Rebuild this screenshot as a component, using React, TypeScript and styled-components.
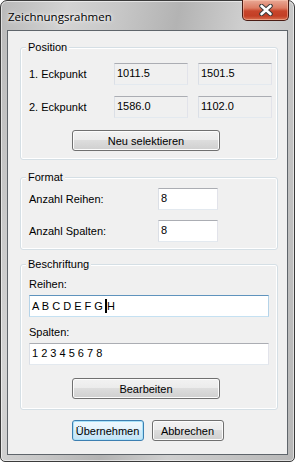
import React from 'react'
import styled, { createGlobalStyle } from 'styled-components'

const GlobalStyle = createGlobalStyle`
  html, body {
    margin: 0;
    padding: 0;
    background: #ffffff;
  }
  * {
    box-sizing: border-box;
  }
`

const Window = styled.div`
  width: 295px;
  height: 462px;
  display: flex;
  flex-direction: column;
  padding: 0 6px 6px 6px;
  border: 1px solid #3b3b3b;
  border-radius: 7px 7px 5px 5px;
  background: linear-gradient(
    100deg,
    #b9b9b9 0%,
    #d3d3d3 18%,
    #c7c7c7 32%,
    #b3b3b3 48%,
    #cfcfcf 66%,
    #c4c4c4 82%,
    #b7b7b7 100%
  );
  box-shadow: inset 0 0 0 1px rgba(255, 255, 255, 0.55);
  font-family: 'Liberation Sans', Arial, sans-serif;
  font-size: 11px;
  color: #000;
`

const TitleBar = styled.div`
  height: 29px;
  flex: none;
  display: flex;
  justify-content: space-between;
  align-items: flex-start;
`

const Title = styled.div`
  align-self: center;
  margin: 1px 0 0 1px;
  font-family: 'Open Sans', 'Noto Sans', sans-serif;
  font-size: 11.5px;
  color: #000;
  text-shadow: 0 0 6px rgba(255, 255, 255, 0.9), 0 0 3px rgba(255, 255, 255, 0.9);
`

const CloseButton = styled.div`
  width: 47px;
  height: 21px;
  margin: -1px -1px 0 0;
  display: flex;
  align-items: center;
  justify-content: center;
  border: 1px solid #4a1c14;
  border-top: none;
  border-radius: 0 0 5px 5px;
  background: linear-gradient(#e9a996 0%, #dc7c63 40%, #c8452b 55%, #c33f25 80%, #d9704f 100%);
  box-shadow: inset 0 0 0 1px rgba(255, 210, 190, 0.45);
`

const Client = styled.div`
  height: 425px;
  display: flex;
  flex-direction: column;
  padding: 0 9px 0 12px;
  border: 1px solid #5f656b;
  background: #f0f0f0;
`

const Group = styled.div<{ $top: number; $bottom: number }>`
  margin-top: ${p => p.$top}px;
  padding: 0 7px ${p => p.$bottom}px 8px;
  border: 1px solid #d5dfe5;
  border-radius: 3px;
  box-shadow: inset 0 0 0 1px #ffffff;
  display: flex;
  flex-direction: column;
`

const Legend = styled.div`
  width: fit-content;
  height: 13px;
  line-height: 13px;
  margin: -7px 0 0 -3px;
  padding: 0 2px;
  background: #f0f0f0;
`

const FieldGrid = styled.div<{ $cols: string; $top: number; $gap: number }>`
  display: grid;
  grid-template-columns: ${p => p.$cols};
  column-gap: 10px;
  row-gap: ${p => p.$gap}px;
  align-items: center;
  margin-top: ${p => p.$top}px;
`

const Label = styled.div<{ $top?: number }>`
  line-height: 13px;
  margin-top: ${p => p.$top ?? 0}px;
`

const Field = styled.div<{ $readOnly?: boolean; $focused?: boolean }>`
  height: 22px;
  padding: 3px 3px 0 2px;
  line-height: 13px;
  white-space: pre;
  background: ${p => (p.$readOnly ? '#f0f0f0' : '#ffffff')};
  border: 1px solid;
  border-color: ${p =>
    p.$focused ? '#5f93bd #b5d3e8 #c5e1f2 #b5d3e8' : '#abadb3 #e2e3ea #e3e9ef #dbdfe6'};
`

const WideField = styled(Field)<{ $top: number }>`
  margin-top: ${p => p.$top}px;
  width: 240px;
`

const Caret = styled.span`
  display: inline-block;
  width: 2px;
  height: 14px;
  margin: 0 0 -3px -1px;
  background: #000;
`

const Button = styled.div<{ $default?: boolean; $width: number; $top?: number; $left?: number }>`
  width: ${p => p.$width}px;
  height: 21px;
  margin-top: ${p => p.$top ?? 0}px;
  margin-left: ${p => p.$left ?? 0}px;
  display: flex;
  align-items: center;
  justify-content: center;
  border: 1px solid ${p => (p.$default ? '#3c7fb1' : '#707070')};
  border-radius: 3px;
  background: ${p =>
    p.$default
      ? 'linear-gradient(#eef8fe 0%, #e3f3fc 49%, #d2ebf9 50%, #c4e4f6 100%)'
      : 'linear-gradient(#f2f2f2 0%, #ebebeb 49%, #dddddd 50%, #cfcfcf 100%)'};
  box-shadow: inset 0 0 0 1px ${p => (p.$default ? '#a9e2f9' : '#fcfcfc')};
`

const ButtonRow = styled.div`
  margin: 10px 0 0 -3px;
  display: flex;
  justify-content: center;
  gap: 8px;
`

function CloseIcon() {
  return (
    <svg width="14" height="12" viewBox="0 0 14 12">
      <path d="M2.5 2 L11.5 10 M11.5 2 L2.5 10" stroke="#3a3a3a" strokeWidth="4.6" strokeLinecap="round" />
      <path d="M2.5 2 L11.5 10 M11.5 2 L2.5 10" stroke="#ffffff" strokeWidth="2.6" strokeLinecap="round" />
    </svg>
  )
}

export default function App() {
  return (
    <>
      <GlobalStyle />
      <Window>
        <TitleBar>
          <Title>Zeichnungsrahmen</Title>
          <CloseButton>
            <CloseIcon />
          </CloseButton>
        </TitleBar>
        <Client>
          <Group $top={16} $bottom={8}>
            <Legend>Position</Legend>
            <FieldGrid $cols="75px 74px 74px" $top={9} $gap={11}>
              <Label>1. Eckpunkt</Label>
              <Field $readOnly>1011.5</Field>
              <Field $readOnly>1501.5</Field>
              <Label>2. Eckpunkt</Label>
              <Field $readOnly>1586.0</Field>
              <Field $readOnly>1102.0</Field>
            </FieldGrid>
            <Button $width={148} $top={12} $left={43}>
              Neu selektieren
            </Button>
          </Group>

          <Group $top={17} $bottom={7}>
            <Legend>Format</Legend>
            <FieldGrid $cols="119px 60px" $top={4} $gap={10}>
              <Label>Anzahl Reihen:</Label>
              <Field>8</Field>
              <Label>Anzahl Spalten:</Label>
              <Field>8</Field>
            </FieldGrid>
          </Group>

          <Group $top={14} $bottom={10}>
            <Legend>Beschriftung</Legend>
            <Label $top={7}>Reihen:</Label>
            <WideField $top={4} $focused>
              {'A B C D E F G '}
              <Caret />
              {'H'}
            </WideField>
            <Label $top={9}>Spalten:</Label>
            <WideField $top={4}>1 2 3 4 5 6 7 8</WideField>
            <Button $width={148} $top={13} $left={43}>
              Bearbeiten
            </Button>
          </Group>

          <ButtonRow>
            <Button $default $width={72}>
              Übernehmen
            </Button>
            <Button $width={72}>Abbrechen</Button>
          </ButtonRow>
        </Client>
      </Window>
    </>
  )
}
